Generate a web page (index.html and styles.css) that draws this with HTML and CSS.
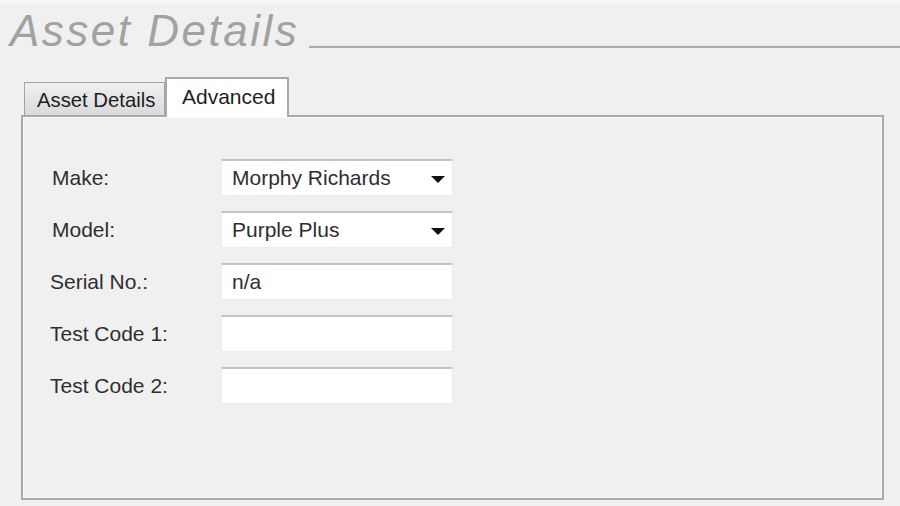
FILE: index.html
```html
<!DOCTYPE html>
<html lang="en">
<head>
<meta charset="utf-8">
<title>Asset Details</title>
<link rel="stylesheet" href="styles.css">
</head>
<body>
<div class="page">
  <header class="header">
    <h1 class="title">Asset Details</h1>
    <div class="rule"></div>
  </header>
  <div class="tabs">
    <div class="tab">Asset Details</div>
    <div class="tab active">Advanced</div>
  </div>
  <section class="panel">
    <div class="form">
      <label class="label indent">Make:</label>
      <div class="field combo"><span>Morphy Richards</span><i class="arrow"></i></div>
      <label class="label indent">Model:</label>
      <div class="field combo"><span>Purple Plus</span><i class="arrow"></i></div>
      <label class="label">Serial No.:</label>
      <div class="field"><span>n/a</span></div>
      <label class="label">Test Code 1:</label>
      <div class="field"></div>
      <label class="label">Test Code 2:</label>
      <div class="field"></div>
    </div>
  </section>
</div>
</body>
</html>
```

FILE: styles.css
```css
* { box-sizing: border-box; }
html, body { margin: 0; padding: 0; }
body {
  width: 900px;
  height: 506px;
  overflow: hidden;
  background: #f0f0f0;
  font-family: "Liberation Sans", Arial, sans-serif;
  color: #333;
}
.page {
  border-top: 4px solid #f7f7f7;
  padding-top: 5px;
}
.header {
  display: flex;
  align-items: flex-start;
}
.title {
  margin: 0;
  padding-left: 10px;
  font-size: 44px;
  line-height: 44px;
  font-weight: normal;
  font-style: italic;
  letter-spacing: 2.5px;
  color: #a2a2a2;
  white-space: nowrap;
}
.rule {
  flex: 1;
  margin-left: 10px;
  margin-top: 36px;
  height: 3px;
  border-top: 1px solid #e6e6e6;
  border-bottom: 2px solid #ababab;
}
.tabs {
  display: flex;
  align-items: flex-end;
  margin-top: 24px;
  margin-left: 22px;
  position: relative;
  z-index: 1;
}
.tab {
  height: 33px;
  width: 141px;
  margin-left: 2px;
  padding: 5px 0 0 12px;
  font-size: 20.3px;
  line-height: 24px;
  color: #1e1e1e;
  border: 1px solid #a3a3a3;
  border-bottom: none;
  background: linear-gradient(#f0f0f0, #dadada);
  white-space: nowrap;
}
.tab.active {
  height: 40px;
  width: 124px;
  margin-left: 0;
  margin-bottom: -2px;
  padding: 6px 0 0 15px;
  font-size: 21px;
  border: 2px solid #a8a8a8;
  border-bottom: none;
  background: #fff;
}
.panel {
  margin-left: 21px;
  width: 863px;
  height: 385px;
  border: 2px solid #a9a9a9;
  box-shadow: inset 1px 1px 0 #fafafa, inset -1px -1px 0 #fafafa;
  background: #f0f0f0;
}
.form {
  display: grid;
  grid-template-columns: 198px 232px;
  row-gap: 15px;
  padding-top: 42px;
}
.label {
  display: flex;
  align-items: center;
  padding-left: 27px;
  font-size: 21px;
  color: #2e2e2e;
  white-space: nowrap;
}
.label.indent { padding-left: 29px; }
.field {
  height: 37px;
  display: flex;
  align-items: center;
  justify-content: space-between;
  padding: 0 7px 0 10px;
  background: #fff;
  border: 1px solid #ececec;
  border-top: 2px solid #c4c4c4;
  font-size: 21px;
  color: #2e2e2e;
  white-space: nowrap;
}
.arrow {
  width: 0;
  height: 0;
  border-left: 7px solid transparent;
  border-right: 7px solid transparent;
  border-top: 7px solid #111;
  margin-top: 2px;
}
```
